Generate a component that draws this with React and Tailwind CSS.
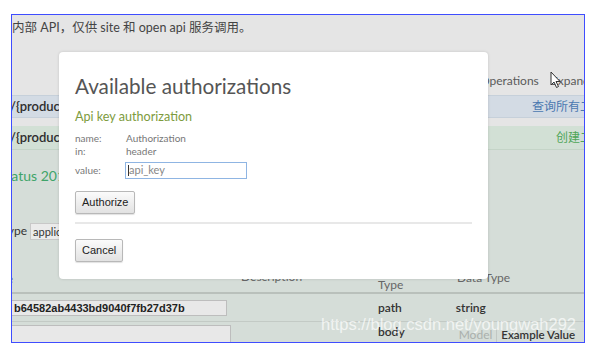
export default function App() {
  const sans = { fontFamily: 'Lato, "Noto Sans CJK SC", sans-serif' };
  const arial = { fontFamily: '"Liberation Sans", Arial, sans-serif' };
  const btn = "h-[23px] px-[6px] text-[11px] text-[#222] border border-[#b8b8b8] rounded-[2px] bg-gradient-to-b from-[#fbfbfb] to-[#e2e2e2] shadow-[0_1px_1px_rgba(0,0,0,0.12)]";
  return (
    <div className="w-[600px] h-[358px] bg-white pt-[14px] pl-[11px]" style={sans}>
      <div className="relative w-[574px] h-[329px] border border-[#3f4dff] overflow-hidden bg-[#d5ddd8]">
        {/* top band */}
        <div className="h-[80px] bg-[#e5e5e5] flex flex-col justify-between">
          <div className="pt-[4px] text-[12.5px] text-[#444] whitespace-nowrap">内部 API，仅供 site 和 open api 服务调用。</div>
          <div className="flex items-center gap-[6px] pb-[5px] pl-[468px] text-[12px] text-[#5a5a5a] whitespace-nowrap">
            <span>Operations</span>
            <span className="w-px h-[15px] bg-[#c8c8c8]" />
            <span className="relative">
              Expand Operations
              <svg className="absolute -left-[1px] -top-[1px]" width="12" height="18" viewBox="0 0 12 18">
                <path d="M1 1 L1 14 L4 11 L6.5 16.5 L8.5 15.5 L6 10.5 L10 10.5 Z" fill="#fff" stroke="#333" strokeWidth="1" />
              </svg>
            </span>
          </div>
        </div>
        {/* row 1 */}
        <div className="h-[23px] bg-[#d3dbe4] border-y border-[#c6d0da] flex items-center justify-between whitespace-nowrap">
          <span className="text-[13px] font-semibold text-[#2e2e2e] -ml-[2px]">/{'{'}productId{'}'}/list</span>
          <span className="text-[12px] text-[#4a78b0] -mr-[20px]">查询所有二级</span>
        </div>
        <div className="h-[8px] bg-[#e5e5e5]" />
        {/* row 2 */}
        <div className="h-[24px] bg-[#d2e0d5] border-b border-[#c4d4c7] flex items-center justify-between whitespace-nowrap">
          <span className="text-[13px] font-semibold text-[#2e2e2e] -ml-[2px]">/{'{'}productId{'}'}/create</span>
          <span className="text-[12px] text-[#4fa558] -mr-[20px]">创建二级</span>
        </div>
        {/* body */}
        <div className="flex flex-col">
          <div className="pt-[16px] h-[36px] leading-[20px] text-[14px] text-[#3fa469] whitespace-nowrap -ml-[13px]">Status 201</div>
          <div className="pt-[36px] flex items-center gap-[3px] whitespace-nowrap -ml-[100px]">
            <span className="w-[115px] text-right text-[12px] text-[#333]">Content Type</span>
            <span className="h-[17px] px-[2px] bg-[#ebebeb] border border-[#c8c8c8] text-[11px] text-[#333] leading-[15px]">application/json</span>
          </div>
          {/* header row */}
          <div className="h-[54px] border-b-2 border-[#b9c0bb] relative whitespace-nowrap text-[12px] leading-[16px] text-[#666]">
            <span className="absolute left-[-40px] w-[41px] text-right top-[31px]">Value</span>
            <span className="absolute left-[229px] top-[29px]">Description</span>
            <span className="absolute left-[366px] top-[22px] flex flex-col leading-[15px]"><span>Parameter</span><span>Type</span></span>
            <span className="absolute left-[445px] top-[30px]">Data Type</span>
          </div>
          {/* row path */}
          <div className="h-[28px] border-b border-[#c3cac5] flex items-center whitespace-nowrap">
            <div className="w-[216px] h-[16px] bg-[#e8e8e8] border border-[#bdbdbd] -ml-px pl-[2px] text-[11px] font-semibold leading-[14px] text-[#222]" style={arial}>b64582ab4433bd9040f7fb27d37b</div>
            <span className="ml-[151px] text-[12px] font-semibold text-[#333]">path</span>
            <span className="ml-[54px] text-[12px] font-semibold text-[#333]">string</span>
          </div>
          {/* row body */}
          <div className="h-[30px] flex items-start whitespace-nowrap pt-[3px] leading-[16px]">
            <div className="w-[220px] h-[40px] bg-[#e8e8e8] border border-[#bdbdbd] -ml-px" />
            <span className="ml-[147px] -mt-[1px] text-[12px] font-semibold text-[#333]">body</span>
            <span className="ml-[54px] mt-[2px] text-[12px] text-[#aab0ac]">Model</span>
            <span className="mx-[4px] mt-[3px] w-px h-[14px] bg-[#c2c8c4]" />
            <span className="mt-[2px] text-[11.5px] font-semibold text-[#333]">Example Value</span>
          </div>
        </div>
        {/* watermark */}
        <div className="absolute left-[309px] top-[299px] text-[16.5px] leading-[20px] text-white/70 whitespace-nowrap" style={arial}>https://blog.csdn.net/youngwah292</div>

        {/* modal */}
        <div className="absolute left-[47px] top-[37px] w-[429px] h-[227px] bg-white rounded-[4px] shadow-[0_0_3px_rgba(0,0,0,0.15)] px-[16px] pt-[22px] flex flex-col">
          <div className="text-[20.7px] leading-[24px] text-[#555] whitespace-nowrap">Available authorizations</div>
          <div className="mt-[11px] text-[12.6px] leading-[16px] text-[#7d9b3d] whitespace-nowrap">Api key authorization</div>
          <div className="mt-[7px] grid grid-cols-[51px_1fr] text-[10px] leading-[13px] text-[#777]">
            <span>name:</span><span>Authorization</span>
            <span>in:</span><span>header</span>
          </div>
          <div className="mt-[4px] flex items-center text-[10px] text-[#777]">
            <span className="w-[50px]">value:</span>
            <div className="w-[122px] h-[17px] border border-[#8fb5e3] pl-[2px] flex items-center text-[11px] text-[#888]">
              <span className="w-px h-[11px] bg-[#333]" />api_key
            </div>
          </div>
          <div className="mt-[12px] flex">
            <button className={btn} style={arial}>Authorize</button>
          </div>
          <div className="mt-[8px] h-[2px] bg-[#e8e8e8]" />
          <div className="mt-[15px] flex">
            <button className={btn} style={arial}>Cancel</button>
          </div>
        </div>
      </div>
    </div>
  );
}
